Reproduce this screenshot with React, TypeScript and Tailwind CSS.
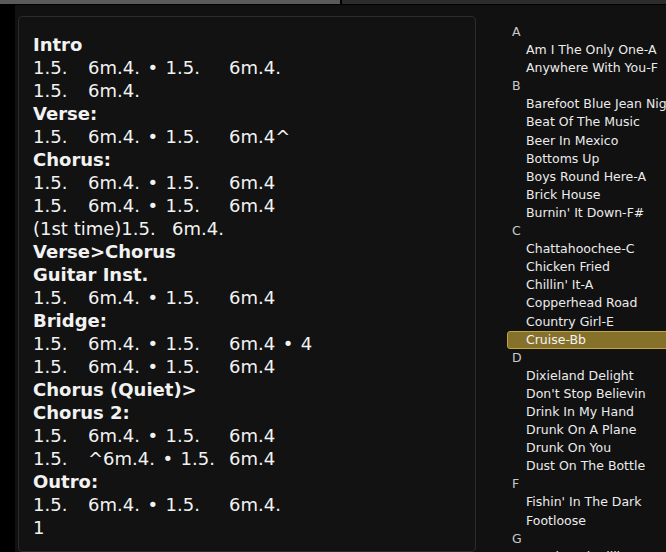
import React from "react";

type Seg = { text: string; w?: string };
type Line = { head: string } | { segs: Seg[] };

const row = (a: string, b: string, c: string): Line => ({
  segs: [
    { text: a, w: "w-[55px]" },
    { text: b, w: "w-[141px]" },
    { text: c },
  ],
});

const lines: Line[] = [
  { head: "Intro" },
  row("1.5.", "6m.4. • 1.5.", "6m.4."),
  { segs: [{ text: "1.5.", w: "w-[55px]" }, { text: "6m.4." }] },
  { head: "Verse:" },
  row("1.5.", "6m.4. • 1.5.", "6m.4^"),
  { head: "Chorus:" },
  row("1.5.", "6m.4. • 1.5.", "6m.4"),
  row("1.5.", "6m.4. • 1.5.", "6m.4"),
  { segs: [{ text: "(1st time)1.5.", w: "w-[139px]" }, { text: "6m.4." }] },
  { head: "Verse>Chorus" },
  { head: "Guitar Inst." },
  row("1.5.", "6m.4. • 1.5.", "6m.4"),
  { head: "Bridge:" },
  row("1.5.", "6m.4. • 1.5.", "6m.4 • 4"),
  row("1.5.", "6m.4. • 1.5.", "6m.4"),
  { head: "Chorus (Quiet)>" },
  { head: "Chorus 2:" },
  row("1.5.", "6m.4. • 1.5.", "6m.4"),
  row("1.5.", "^6m.4. • 1.5.", "6m.4"),
  { head: "Outro:" },
  row("1.5.", "6m.4. • 1.5.", "6m.4."),
  { segs: [{ text: "1" }] },
];

type Item = { letter: string } | { song: string; active?: boolean };

const songs: Item[] = [
  { letter: "A" },
  { song: "Am I The Only One-A" },
  { song: "Anywhere With You-F" },
  { letter: "B" },
  { song: "Barefoot Blue Jean Night" },
  { song: "Beat Of The Music" },
  { song: "Beer In Mexico" },
  { song: "Bottoms Up" },
  { song: "Boys Round Here-A" },
  { song: "Brick House" },
  { song: "Burnin' It Down-F#" },
  { letter: "C" },
  { song: "Chattahoochee-C" },
  { song: "Chicken Fried" },
  { song: "Chillin' It-A" },
  { song: "Copperhead Road" },
  { song: "Country Girl-E" },
  { song: "Cruise-Bb", active: true },
  { letter: "D" },
  { song: "Dixieland Delight" },
  { song: "Don't Stop Believin" },
  { song: "Drink In My Hand" },
  { song: "Drunk On A Plane" },
  { song: "Drunk On You" },
  { song: "Dust On The Bottle" },
  { letter: "F" },
  { song: "Fishin' In The Dark" },
  { song: "Footloose" },
  { letter: "G" },
  { song: "Good Lord Willing-G" },
];

export default function App() {
  return (
    <div
      className="w-[666px] h-[552px] bg-black flex flex-col overflow-hidden"
      style={{ fontFamily: '"DejaVu Sans", "Liberation Sans", sans-serif' }}
    >
      {/* top bars */}
      <div className="h-[4px] flex gap-[2px] shrink-0">
        <div className="w-[340px] bg-[#5a5a5a]" />
        <div className="flex-1 bg-[#2c2c2c]" />
      </div>
      <div className="flex-1 flex mt-[1px] pl-[15px] min-h-0">
        <div className="flex-1 flex bg-[#111111] min-h-0">
          {/* chart */}
          <div className="ml-[3px] mt-[11px] w-[458px] shrink-0 border border-[#2b2b2b] rounded-[4px] bg-[#121212] pl-[14px] pt-[16px] text-[18px] leading-[23px] text-[#f2f2f2]">
            {lines.map((l, i) =>
              "head" in l ? (
                <div key={i} className="font-bold h-[23px]">
                  {l.head}
                </div>
              ) : (
                <div key={i} className="h-[23px] whitespace-pre flex">
                  {l.segs.map((s, j) => (
                    <span key={j} className={s.w ? `${s.w} shrink-0` : ""}>
                      {s.text.replace(" • ", " \u200A•\u200A ")}
                    </span>
                  ))}
                </div>
              )
            )}
          </div>

          {/* song list */}
          <div className="flex-1 pt-[18px] text-[12.5px] overflow-hidden">
            {songs.map((s, i) =>
              "letter" in s ? (
                <div
                  key={i}
                  className="h-[18.1px] leading-[18px] pl-[36px] text-[#c9c9c9]"
                >
                  {s.letter}
                </div>
              ) : s.active ? (
                <div
                  key={i}
                  className="h-[18.1px] leading-[16px] ml-[31px] -mr-[6px] pl-[18px] border border-[#c4a43e] rounded-[3px] bg-[#86712b] text-[#f4f4f4] whitespace-nowrap"
                >
                  {s.song}
                </div>
              ) : (
                <div
                  key={i}
                  className="h-[18.1px] leading-[18px] pl-[50px] text-[#ececec] whitespace-nowrap"
                >
                  {s.song}
                </div>
              )
            )}
          </div>
        </div>
      </div>
    </div>
  );
}
